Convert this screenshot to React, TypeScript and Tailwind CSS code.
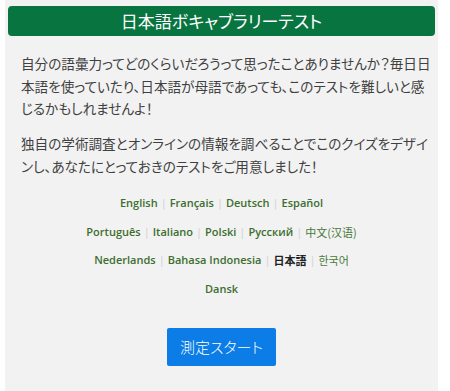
import React from "react";

const jp = "font-['Noto_Sans_CJK_JP',sans-serif]";

const rows: { label: string; current?: boolean; cjk?: boolean }[][] = [
  [{ label: "English" }, { label: "Français" }, { label: "Deutsch" }, { label: "Español" }],
  [{ label: "Português" }, { label: "Italiano" }, { label: "Polski" }, { label: "Русский" }, { label: "中文(汉语)", cjk: true }],
  [{ label: "Nederlands" }, { label: "Bahasa Indonesia" }, { label: "日本語", current: true }, { label: "한국어", cjk: true }],
  [{ label: "Dansk" }],
];

export default function App() {
  return (
    <div className="w-[450px] h-[391px] bg-white overflow-hidden">
      <div className="ml-[5px] w-[433px] h-[391px] bg-[#f2f2f2] px-[3px] pt-[6px]">
        <div className={`h-[30px] rounded-[4px] bg-[#087541] flex items-center justify-center text-white text-[17px] ${jp} [font-feature-settings:'palt']`}>
          日本語ボキャブラリーテスト
        </div>
        <div className={`px-[13px] mt-[16px] text-[13.6px] leading-[22.5px] text-[#404040] ${jp} [font-feature-settings:'palt'] whitespace-nowrap`}>
          <p>
            自分の語彙力ってどのくらいだろうって思ったことありませんか？毎日日
            <br />
            本語を使っていたり、日本語が母語であっても、このテストを難しいと感
            <br />
            じるかもしれませんよ！
          </p>
          <p className="mt-[12.5px]">
            独自の学術調査とオンラインの情報を調べることでこのクイズをデザイ
            <br />
            ンし、あなたにとっておきのテストをご用意しました！
          </p>
        </div>
        <div className="mt-[12px] flex flex-col items-center font-['Open_Sans','Noto_Sans_CJK_JP',sans-serif] text-[11px] font-semibold">
          {rows.map((row, i) => (
            <div key={i} className="h-[28.7px] flex items-center">
              {row.map((item, j) => (
                <React.Fragment key={j}>
                  {j > 0 && <span className="mx-[3px] text-[#d0d0d0] font-normal">|</span>}
                  <span
                    className={
                      item.current
                        ? `text-[#222222] font-bold ${jp}`
                        : item.cjk
                        ? `text-[#4a7a3a] font-normal ${jp}`
                        : "text-[#3d6e2f]"
                    }
                  >
                    {item.label}
                  </span>
                </React.Fragment>
              ))}
            </div>
          ))}
        </div>
        <div className="mt-[24px] flex justify-center">
          <button className={`w-[109px] h-[38px] rounded-[2px] bg-[#0c7ce6] text-white text-[15px] font-light ${jp} [font-feature-settings:'palt']`}>
            測定スタート
          </button>
        </div>
      </div>
    </div>
  );
}
